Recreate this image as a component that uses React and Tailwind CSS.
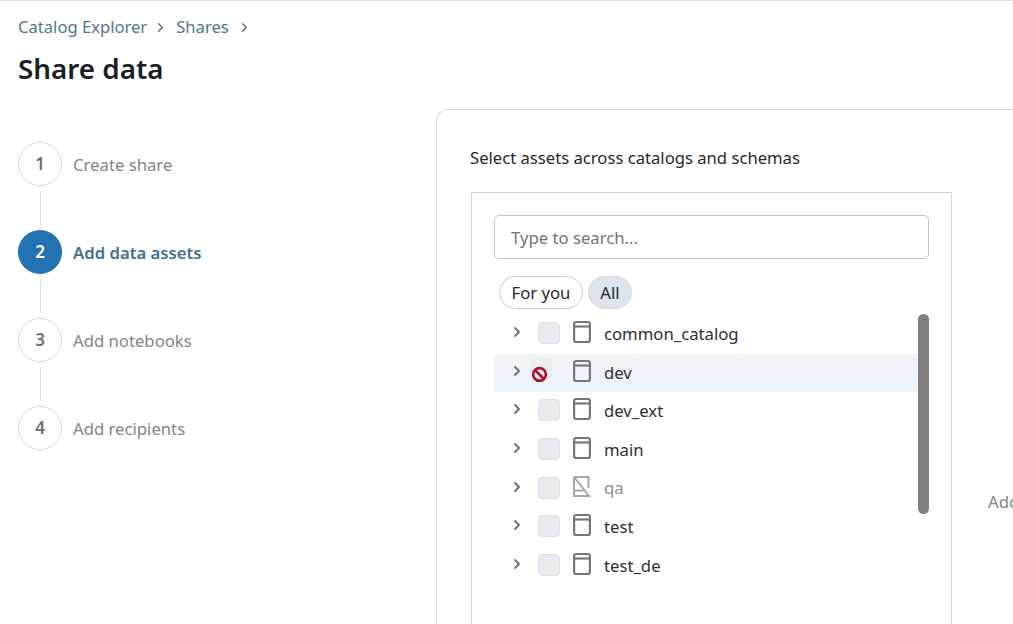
import { ChevronRight } from "lucide-react";

const steps = [
  { n: 1, label: "Create share" },
  { n: 2, label: "Add data assets", active: true },
  { n: 3, label: "Add notebooks" },
  { n: 4, label: "Add recipients" },
];

const catalogs = [
  { name: "common_catalog" },
  { name: "dev", hover: true },
  { name: "dev_ext" },
  { name: "main" },
  { name: "qa", disabled: true },
  { name: "test" },
  { name: "test_de" },
];

function CatalogIcon() {
  return (
    <svg width="18" height="24" viewBox="0 0 18 24" fill="none" stroke="#77777b" strokeWidth="2.2">
      <rect x="1.1" y="2" width="15.8" height="20" rx="2" />
      <path d="M1 6.5h16" />
    </svg>
  );
}

function NoAccessCatalogIcon() {
  return (
    <svg width="20" height="24" viewBox="0 0 20 24" fill="none" stroke="#a4a8ad" strokeWidth="2">
      <path d="M2 2h14.5v11" />
      <path d="M2 2v19h15" />
      <path d="M2 2l16 20" />
      <path d="M2 15.5h11" />
    </svg>
  );
}

function BlockedCursor() {
  return (
    <svg className="absolute -left-[7px] top-[5px]" width="17" height="17" viewBox="0 0 17 17" fill="none" stroke="#b01030" strokeWidth="2.6">
      <circle cx="8.5" cy="8.5" r="6.4" />
      <path d="M4 4l9 9" />
    </svg>
  );
}

function CatalogRow({ name, hover, disabled }) {
  return (
    <div className={`flex h-[38.6px] items-center ${hover ? "bg-[#eff3fa]" : ""}`}>
      <ChevronRight className="ml-[15px] -mt-[4px] w-[16px] h-[16px] text-[#6f6f73]" strokeWidth={2.8} />
      <div className="relative ml-[13px] -mt-[2px] h-[22px] w-[22px]">
        {hover ? (
          <>
            <div className="absolute -left-[8px] -top-[2px] h-[22px] w-[22px] rounded-[4px] bg-[#ecedf2]" />
            <BlockedCursor />
          </>
        ) : (
          <div className="h-[22px] w-[22px] rounded-[4px] border border-[#e0e1e8] bg-[#e9eaf0]" />
        )}
      </div>
      <div className="ml-[10px] -mt-[4px] flex w-[24px] justify-center">
        {disabled ? <NoAccessCatalogIcon /> : <CatalogIcon />}
      </div>
      <span className={`ml-[10px] text-[16.7px] leading-none ${disabled ? "text-[#8b9096]" : "text-[#2b3138]"}`}>{name}</span>
    </div>
  );
}

function Stepper() {
  return (
    <div className="ml-[18px] flex w-[418px] shrink-0 flex-col pt-[33px]">
      {steps.map((s, i) => (
        <div key={s.n} className="flex flex-col">
          <div className="flex items-center">
            <div
              className={`flex h-[44px] w-[44px] items-center justify-center rounded-full text-[17px] font-semibold ${
                s.active ? "bg-[#2272b4] text-white" : "border border-[#d9dadc] text-[#6f6f73]"
              }`}
            >
              {s.n}
            </div>
            <span className={`ml-[11px] pt-[2px] text-[16.7px] ${s.active ? "font-semibold text-[#42708f]" : "text-[#858585]"}`}>{s.label}</span>
          </div>
          {i < steps.length - 1 && (
            <div className="my-[5px] ml-[22px] h-[34px] w-px bg-[#d9dadc]" />
          )}
        </div>
      ))}
    </div>
  );
}

export default function App() {
  return (
    <div className="h-[624px] w-[1013px] overflow-hidden bg-white font-['Noto_Sans','Open_Sans',sans-serif] text-[#1f2328]">
      <div className="h-px bg-[#dfe1e5]" />
      <div className="flex items-center pl-[18px] pt-[14px] text-[16.6px] leading-[24px] text-[#52788f]">
        <span>Catalog Explorer</span>
        <ChevronRight className="ml-[6px] mr-[8px] h-[15px] w-[15px] text-[#6f6f73]" strokeWidth={2.4} />
        <span>Shares</span>
        <ChevronRight className="ml-[8px] h-[15px] w-[15px] text-[#6f6f73]" strokeWidth={2.4} />
      </div>
      <h1 className="pl-[18px] pt-[8px] text-[27.8px] font-semibold leading-[42px] text-[#1b1f24]">Share data</h1>
      <div className="flex pt-[20px]">
        <Stepper />
        <div className="h-[600px] flex-1 rounded-tl-[12px] border-l border-t border-[#dcdcdc] pl-[33px] pt-[35px]">
          <p className="text-[16.65px] leading-[26px] text-[#24292e]">Select assets across catalogs and schemas</p>
          <div className="relative ml-px mt-[21px] h-[500px] w-[481px] border border-[#d4d4d4] pl-[22px] pr-[22px] pt-[22px]">
            <div className="flex h-[44px] items-center rounded-[5px] border border-[#c4c6c9] pl-[16px] pt-[2px] text-[16.7px] text-[#70757a]">
              Type to search...
            </div>
            <div className="mt-[17px] flex items-center gap-[5px] pl-[5px]">
              <span className="flex h-[33px] w-[84px] items-center justify-center rounded-full border border-[#c9cbce] text-[16.7px] text-[#24292e]">For you</span>
              <span className="flex h-[33px] w-[44px] items-center justify-center rounded-full border border-[#d2d9e2] bg-[#dee4ec] text-[16.7px] text-[#24292e]">All</span>
            </div>
            <div className="mt-[6px] w-[424px]">
              {catalogs.map((c) => (
                <CatalogRow key={c.name} {...c} />
              ))}
            </div>
            <div className="absolute left-[446px] top-[121px] h-[200px] w-[11px] rounded-full bg-[#7f7f7f]" />
            <span className="absolute left-[516px] top-[296px] text-[16.7px] text-[#858585]">Add</span>
          </div>
        </div>
      </div>
    </div>
  );
}
